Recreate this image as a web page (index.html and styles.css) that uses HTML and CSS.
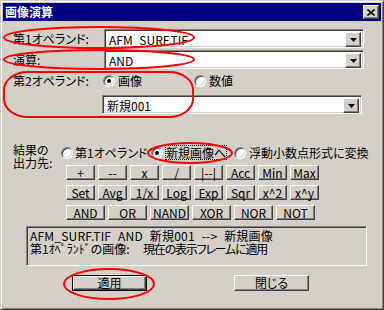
FILE: index.html
```html
<!DOCTYPE html>
<html lang="ja">
<head>
<meta charset="utf-8">
<link rel="stylesheet" href="styles.css">
</head>
<body>
<div class="screen">
  <div class="window">
    <div class="titlebar">
      <span class="title">画像演算</span>
      <span class="close raised"><svg width="8" height="7" viewBox="0 0 8 7"><path d="M0.5 0.5L7.5 6.5M7.5 0.5L0.5 6.5" stroke="#000" stroke-width="1.6" fill="none"/></svg></span>
    </div>
    <div class="content">
      <div class="row r1">
        <span class="label">第1オペランド:</span>
        <div class="combo"><span class="combo-text">AFM_SURF.TIF</span><span class="combo-btn raised"><svg width="7" height="4" viewBox="0 0 7 4"><path d="M0 0H7L3.5 4Z" fill="#000"/></svg></span></div>
      </div>
      <div class="row r2">
        <span class="label">演算:</span>
        <div class="combo"><span class="combo-text">AND</span><span class="combo-btn raised"><svg width="7" height="4" viewBox="0 0 7 4"><path d="M0 0H7L3.5 4Z" fill="#000"/></svg></span></div>
      </div>
      <div class="row r3">
        <span class="label label3">第2オペランド:</span>
        <span class="radio-item ri-img"><span class="radio checked"></span><span class="rtext">画像</span></span>
        <span class="radio-item"><span class="radio"></span><span class="rtext">数値</span></span>
      </div>
      <div class="row r4">
        <div class="combo"><span class="combo-text">新規001</span><span class="combo-btn raised"><svg width="7" height="4" viewBox="0 0 7 4"><path d="M0 0H7L3.5 4Z" fill="#000"/></svg></span></div>
      </div>
      <div class="result">
        <div class="result-label">結果の<br>出力先:</div>
        <div class="result-main">
          <div class="radios">
            <span class="radio-item ri1"><span class="radio"></span><span class="rtext clip">第1オペランドへ</span></span>
            <span class="radio-item ri2"><span class="radio checked"></span><span class="rtext focus">新規画像へ</span></span>
            <span class="radio-item ri3"><span class="radio"></span><span class="rtext">浮動小数点形式に変換</span></span>
          </div>
          <div class="grid g8">
            <span class="btn raised">+</span><span class="btn raised">--</span><span class="btn raised">x</span><span class="btn raised">/</span><span class="btn raised">|--|</span><span class="btn raised">Acc</span><span class="btn raised">Min</span><span class="btn raised">Max</span>
          </div>
          <div class="grid g8">
            <span class="btn raised">Set</span><span class="btn raised">Avg</span><span class="btn raised">1/x</span><span class="btn raised">Log</span><span class="btn raised">Exp</span><span class="btn raised">Sqr</span><span class="btn raised">x^2</span><span class="btn raised">x^y</span>
          </div>
          <div class="grid g6">
            <span class="btn raised">AND</span><span class="btn raised">OR</span><span class="btn raised">NAND</span><span class="btn raised">XOR</span><span class="btn raised">NOR</span><span class="btn raised">NOT</span>
          </div>
        </div>
      </div>
      <div class="info">
        <div class="info-line wide">AFM_SURF.TIF AND 新規001 --&gt; 新規画像</div>
        <div class="info-line">第1ｵﾍﾟﾗﾝﾄﾞの画像:&nbsp;&nbsp;&nbsp;&nbsp;&nbsp;<span class="tight">現在の表示フレームに適用</span></div>
      </div>
      <div class="actions">
        <span class="action default"><span class="action-inner raised">適用</span></span>
        <span class="action"><span class="action-inner raised">閉じる</span></span>
      </div>
    </div>
  </div>
  <svg class="marks" width="384" height="310" viewBox="0 0 384 310">
    <g fill="none" stroke="#ff0000" stroke-width="2">
      <ellipse cx="99" cy="37.5" rx="95" ry="10.5"/>
      <ellipse cx="99" cy="59.5" rx="95" ry="9.5"/>
      <rect x="4" y="72" width="189" height="45" rx="24" ry="18"/>
      <ellipse cx="190" cy="153" rx="42" ry="10"/>
      <ellipse cx="109" cy="284" rx="45" ry="15"/>
    </g>
  </svg>
</div>
</body>
</html>
```
FILE: styles.css
```css
html, body {
  margin: 0;
  padding: 0;
}
body {
  width: 384px;
  height: 310px;
  overflow: hidden;
  font-family: "Noto Sans CJK JP", "Noto Sans", sans-serif;
  font-size: 12px;
  font-feature-settings: "palt";
  color: #000;
  background: #d4d0c8;
}
.screen {
  position: relative;
  width: 384px;
  height: 310px;
}
.window {
  width: 384px;
  height: 310px;
  box-sizing: border-box;
  background: #d4d0c8;
  border: 1px solid;
  border-color: #d4d0c8 #404040 #404040 #d4d0c8;
  box-shadow: inset 1px 1px #fff, inset -1px -1px #808080;
  padding: 2px;
}
.raised {
  box-sizing: border-box;
  background: #d4d0c8;
  border: 1px solid;
  border-color: #fff #404040 #404040 #fff;
  box-shadow: inset -1px -1px #808080;
}
.titlebar {
  height: 18px;
  background: #000080;
  color: #fff;
  display: flex;
  align-items: center;
  justify-content: space-between;
  padding: 0 2px;
}
.title {
  font-weight: 700;
  line-height: 18px;
}
.close {
  width: 16px;
  height: 14px;
  display: flex;
  align-items: center;
  justify-content: center;
  padding-right: 1px;
}
.content {
  padding: 8px 0 0 10px;
}
.row {
  display: flex;
  align-items: center;
}
.label {
  width: 91px;
  flex: none;
  line-height: 19px;
  white-space: nowrap;
}
.r1 { height: 19px; }
.r2 { height: 19px; margin-top: 2px; }
.r3 { height: 14px; margin-top: 5px; }
.label3 { width: 90px; line-height: 14px; }
.r4 { margin-top: 7px; padding-left: 89px; }
.combo {
  display: flex;
  width: 260px;
  height: 19px;
  box-sizing: border-box;
  background: #fff;
  border: 1px solid;
  border-color: #808080 #fff #fff #808080;
  box-shadow: inset 1px 1px #404040, inset -1px -1px #d4d0c8;
  padding: 2px;
}
.combo-text {
  flex: 1;
  padding-left: 2px;
  line-height: 15px;
  white-space: nowrap;
}
.combo-btn {
  width: 16px;
  height: 15px;
  flex: none;
  display: flex;
  align-items: center;
  justify-content: center;
}
.radio-item {
  display: flex;
  align-items: center;
  height: 14px;
  white-space: nowrap;
}
.ri-img { width: 91px; }
.radio {
  width: 12px;
  height: 12px;
  flex: none;
  box-sizing: border-box;
  border-radius: 50%;
  background: #fff;
  border: 1px solid;
  border-color: #808080 #fff #fff #808080;
  box-shadow: inset 1px 1px #404040, inset -1px -1px #d4d0c8;
  display: flex;
  align-items: center;
  justify-content: center;
}
.radio.checked::after {
  content: "";
  width: 4px;
  height: 4px;
  border-radius: 50%;
  background: #000;
}
.rtext {
  margin-left: 3px;
  line-height: 14px;
}
.result {
  display: flex;
  margin-top: 29px;
}
.result-label {
  width: 48px;
  flex: none;
  line-height: 13px;
}
.result-main {
  padding-top: 3px;
  flex: none;
}
.radios {
  display: flex;
  height: 13px;
  align-items: center;
}
.ri1 { width: 90px; }
.ri1 .clip {
  width: 74px;
  overflow: hidden;
  margin-left: 2px;
}
.ri2 { width: 83px; }
.ri2 .focus {
  outline: 1px dotted #000;
  line-height: 13px;
}
.grid {
  display: flex;
  margin-left: 5px;
  margin-top: 5px;
  gap: 3px;
}
.radios + .grid { margin-top: 6px; }
.btn {
  height: 15px;
  display: flex;
  align-items: center;
  justify-content: center;
  line-height: 13px;
  white-space: nowrap;
}
.g8 .btn { width: 29px; }
.g6 .btn { width: 39px; }
.info {
  margin: 6px 0 0 13px;
  width: 341px;
  height: 40px;
  box-sizing: border-box;
  border: 1px solid;
  border-color: #808080 #fff #fff #808080;
  box-shadow: inset 1px 1px #404040, inset -1px -1px #d4d0c8;
  padding: 2px 0 0 3px;
  white-space: nowrap;
  overflow: hidden;
}
.info-line {
  height: 13px;
  line-height: 13px;
}
.info-line.wide {
  word-spacing: 4px;
  letter-spacing: 0.2px;
}
.tight {
  letter-spacing: -1.2px;
}
.actions {
  display: flex;
  margin: 9px 0 0 59px;
  gap: 87px;
}
.action {
  width: 75px;
  height: 16px;
  box-sizing: border-box;
  display: flex;
}
.action.default {
  border: 1px solid #000;
}
.action-inner {
  flex: 1;
  display: flex;
  align-items: center;
  justify-content: center;
  line-height: 14px;
}
.marks {
  position: absolute;
  left: 0;
  top: 0;
  pointer-events: none;
}
```
